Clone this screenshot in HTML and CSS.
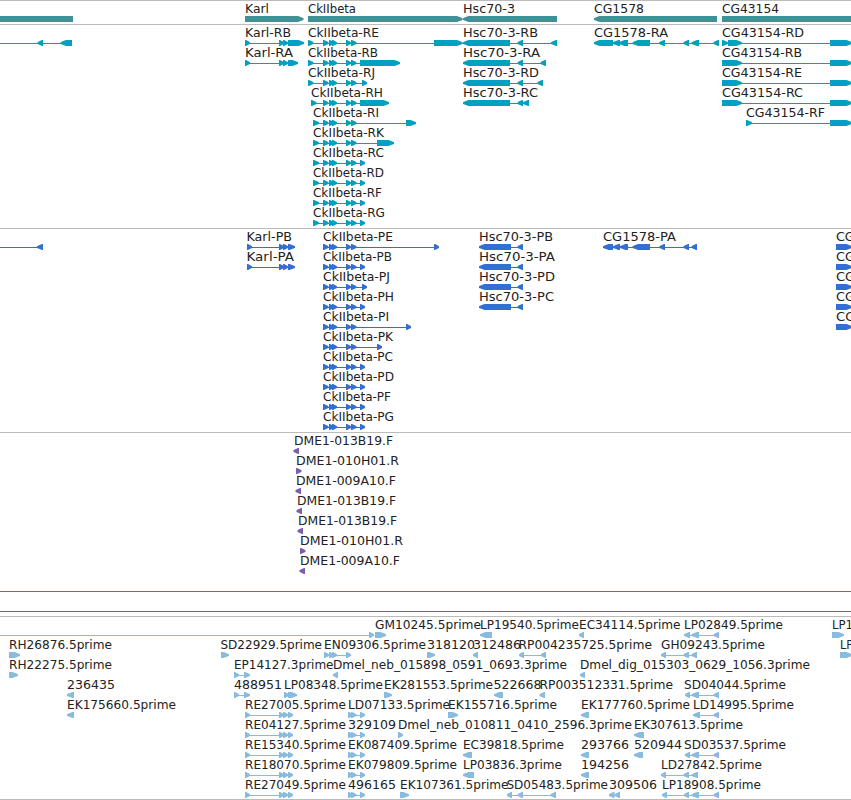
FILE: index.html
```
<!DOCTYPE html>
<html lang="en">
<head>
    <meta charset="UTF-8">
    <title>Genome Browser</title>
    <link rel="stylesheet" href="styles.css">
</head>
<body>
    <main class="browser">
        <svg class="track genes" id="genes"></svg>
        <svg class="track transcripts" id="transcripts"></svg>
        <svg class="track proteins" id="proteins"></svg>
        <svg class="track ends" id="ends"></svg>
        <svg class="track ests" id="ests"></svg>
    </main>
    <script src="tracks.js"></script>
</body>
</html>
```
FILE: styles.css
```
body {
    margin: 0;
    background: #fff;
    overflow: hidden;
}
.browser {
    display: flex;
    flex-direction: column;
    width: 851px;
    height: 800px;
    overflow: hidden;
}
.track {
    display: block;
    box-sizing: border-box;
    flex: none;
    width: 100%;
    border-top: 1px solid #bbb;
    overflow: hidden;
}
.track text {
    font-family: "DejaVu Sans", sans-serif;
    font-size: 12px;
    fill: #222;
}
.genes {
    height: 24px;
    color: #409096;
}
.transcripts {
    height: 204px;
    color: #00a0c0;
}
.proteins {
    height: 204px;
    color: #326fd0;
}
.ends {
    height: 184px;
    color: #7a5faf;
}
.ests {
    height: 184px;
    color: #88bbdd;
    border-bottom: 1px solid #bbb;
}
.backbone, .block {
    fill: currentColor;
}
.backbone {
    shape-rendering: crispEdges;
}
```
FILE: tracks.js
```
const NS = 'http://www.w3.org/2000/svg';
const ROW = 20;
const TIP = 5.5;

// exons shared by the CkIIbeta models
const CK = [[323, 328.5], [329, 334], [332, 337], [346, 351], [351, 356.5]];
const KARL = [[279, 284], [283, 288]];
const RE = [[245, 250], [279, 284], [283, 288], [288, 293]];
const LD = [[348, 353], [351, 356.5], [360, 365]];
const EP = [[234, 239], [244, 250]];
const HSC_P = [[479, 511], [517.5, 523]];
const CG_R = [[722, 742], [830, 852]];
const SD = [[685, 690], [691.5, 699], [713.5, 719]];

// row, label, label start, label end, strand, blocks
const tracks = {
    genes: [
        [0, '', 0, 0, -1, [[-20, 73]]],
        [0, 'Karl', 245, 269, 1, [[245, 303.5]]],
        [0, 'CkIIbeta', 308, 356, 1, [[308, 462.5]]],
        [0, 'Hsc70-3', 463, 515, -1, [[463, 557]]],
        [0, 'CG1578', 594, 644, -1, [[594, 717]]],
        [0, 'CG43154', 722, 779, 1, [[722, 880]]]
    ],
    transcripts: [
        [0, '', 0, 0, -1, [[-20, -10], [37.5, 43], [60.5, 72]]],
        [0, 'Karl-RB', 245, 291, 1, [[245, 250], ...KARL, [288, 304]]],
        [1, 'Karl-RA', 245, 293, 1, [[245, 250], ...KARL, [288, 298]]],
        [0, 'CkIIbeta-RE', 308, 379, 1, [[308, 313.5], ...CK, [434, 462.5]]],
        [1, 'CkIIbeta-RB', 308, 378, 1, [[308, 313.5], ...CK, [360, 400]]],
        [2, 'CkIIbeta-RJ', 308, 375, 1, [[308, 313.5], ...CK, [362, 367]]],
        [3, 'CkIIbeta-RH', 311, 383, 1, [[311, 316.5], ...CK, [360, 389]]],
        [4, 'CkIIbeta-RI', 313, 379, 1, [[313, 319], ...CK, [406, 416]]],
        [5, 'CkIIbeta-RK', 313, 384, 1, [[313, 319], ...CK, [377, 394]]],
        [6, 'CkIIbeta-RC', 313, 384, 1, [[313, 319], ...CK, [360, 365]]],
        [7, 'CkIIbeta-RD', 313, 384, 1, [[313, 319], ...CK, [360, 365]]],
        [8, 'CkIIbeta-RF', 313, 382, 1, [[313, 319], ...CK, [360, 365]]],
        [9, 'CkIIbeta-RG', 313, 385, 1, [[313, 319], ...CK, [360, 365]]],
        [0, 'Hsc70-3-RB', 463, 538, -1, [[463, 510], [517.5, 523], [551, 557]]],
        [1, 'Hsc70-3-RA', 463, 540, -1, [[463, 510], [517.5, 523], [540.5, 546]]],
        [2, 'Hsc70-3-RD', 463, 539, -1, [[463, 510], [517.5, 523], [537.5, 543]]],
        [3, 'Hsc70-3-RC', 463, 538, -1, [[463, 510], [517.5, 523], [523, 529]]],
        [0, 'CG1578-RA', 594, 668, -1, [[594, 613], [613, 620], [619, 628], [632.5, 650], [659, 665], [683.5, 689], [691.5, 699], [713.5, 719]]],
        [0, 'CG43154-RD', 722, 804, 1, [[722, 728], [728, 742], [830, 852]]],
        [1, 'CG43154-RB', 722, 802, 1, CG_R],
        [2, 'CG43154-RE', 722, 802, 1, CG_R],
        [3, 'CG43154-RC', 722, 803, 1, CG_R],
        [4, 'CG43154-RF', 746, 825, 1, [[746, 752], [830, 852]]]
    ],
    proteins: [
        [0, '', 0, 0, -1, [[-20, -10], [37, 43]]],
        [0, 'Karl-PB', 246.5, 292, 1, [[247, 252], ...KARL, [288, 295]]],
        [1, 'Karl-PA', 246.5, 294, 1, [[247, 252], ...KARL, [288, 295]]],
        [0, 'CkIIbeta-PE', 323, 393, 1, [...CK, [434, 439]]],
        [1, 'CkIIbeta-PB', 323, 392, 1, [...CK, [360, 365]]],
        [2, 'CkIIbeta-PJ', 323, 390, 1, [...CK, [362, 367]]],
        [3, 'CkIIbeta-PH', 323, 394, 1, [...CK, [360, 365]]],
        [4, 'CkIIbeta-PI', 323, 389, 1, [...CK, [406, 411]]],
        [5, 'CkIIbeta-PK', 323, 393, 1, [...CK, [377, 382]]],
        [6, 'CkIIbeta-PC', 323, 393, 1, [...CK, [360, 365]]],
        [7, 'CkIIbeta-PD', 323, 394, 1, [...CK, [360, 365]]],
        [8, 'CkIIbeta-PF', 323, 391, 1, [...CK, [360, 365]]],
        [9, 'CkIIbeta-PG', 323, 394, 1, [...CK, [360, 365]]],
        [0, 'Hsc70-3-PB', 479, 553, -1, HSC_P],
        [1, 'Hsc70-3-PA', 479, 555, -1, HSC_P],
        [2, 'Hsc70-3-PD', 479, 555, -1, HSC_P],
        [3, 'Hsc70-3-PC', 479, 554, -1, HSC_P],
        [0, 'CG1578-PA', 603, 676, -1, [[603, 613], [613, 620], [620, 628], [632.5, 650], [659.5, 665], [683.5, 689], [691.5, 697]]],
        [0, 'CG43154-PD', 836, 917, 1, [[836, 852]]],
        [1, 'CG43154-PB', 836, 917, 1, [[836, 852]]],
        [2, 'CG43154-PE', 836, 917, 1, [[836, 852]]],
        [3, 'CG43154-PC', 836, 917, 1, [[836, 852]]],
        [4, 'CG43154-PF', 836, 917, 1, [[836, 852]]]
    ],
    ends: [
        [0, 'DME1-013B19.F', 294, 393, -1, [[293.5, 299]]],
        [1, 'DME1-010H01.R', 296, 399, 1, [[296, 301.5]]],
        [2, 'DME1-009A10.F', 296, 396, -1, [[295.5, 301]]],
        [3, 'DME1-013B19.F', 297, 396, -1, [[296.5, 302]]],
        [4, 'DME1-013B19.F', 298, 397, -1, [[297.5, 303]]],
        [5, 'DME1-010H01.R', 300, 403, 1, [[300, 305.5]]],
        [6, 'DME1-009A10.F', 300, 400, -1, [[299.5, 305]]],
        [7, '', 0, 0, 1, [[-20, -10], [870, 880]]],
        [8, '', 0, 0, 1, [[-20, -10], [870, 880]]]
    ],
    ests: [
        [0, '', 0, 0, 1, [[-20, -10], [369, 374]]],
        [0, 'GM10245.5prime', 375, 481, 1, [[375, 386]]],
        [0, 'LP19540.5prime', 480, 579, -1, [[480, 492]]],
        [0, 'EC34114.5prime', 579, 680.5, -1, [[579, 584]]],
        [0, 'LP02849.5prime', 684, 783, -1, [[684, 690], [691.5, 699], [713.5, 719]]],
        [0, 'LP1', 832, 853, 1, [[832, 844]]],
        [1, 'RH26876.5prime', 9, 112, 1, [[9, 20]]],
        [1, 'SD22929.5prime', 220.5, 322, 1, [[221, 229]]],
        [1, 'EN09306.5prime', 324, 426, 1, [[324, 329], [329, 334], [332, 337], [346, 351]]],
        [1, '318120', 427, 475, 1, [[427, 435]]],
        [1, '312486', 473, 521, -1, [[473, 478]]],
        [1, 'RP004235725.5prime', 518.5, 652, -1, [[519, 524], [541, 546]]],
        [1, 'GH09243.5prime', 661, 765, -1, [[661, 666], [683.5, 689], [691.5, 697]]],
        [1, 'LP', 840, 853, 1, [[840, 852]]],
        [2, 'RH22275.5prime', 9, 112, 1, [[9, 18]]],
        [2, 'EP14127.3prime', 234, 333.5, 1, EP],
        [2, 'Dmel_neb_015898_0591_0693.3prime', 333, 567, -1, [[333, 338]]],
        [2, 'Dmel_dig_015303_0629_1056.3prime', 580, 810, -1, [[580, 585]]],
        [3, '236435', 67, 115, -1, [[67, 74]]],
        [3, '488951', 234, 282, 1, EP],
        [3, 'LP08348.5prime', 284, 383, 1, [[284, 289], [288, 297]]],
        [3, 'EK281553.5prime', 384, 493, 1, [[384, 392]]],
        [3, '522668', 493.5, 541.5, -1, [[494, 503]]],
        [3, 'RP003512331.5prime', 539.5, 673, -1, [[539.5, 545]]],
        [3, 'SD04044.5prime', 684, 786, -1, SD],
        [4, 'EK175660.5prime', 67, 176, -1, [[67, 74]]],
        [4, 'RE27005.5prime', 245, 346, 1, RE],
        [4, 'LD07133.5prime', 348, 450, 1, LD],
        [4, 'EK155716.5prime', 448, 557, 1, [[448, 458]]],
        [4, 'EK177760.5prime', 581, 690, -1, [[581, 589]]],
        [4, 'LD14995.5prime', 693, 794, -1, [[693, 700], [713.5, 719]]],
        [5, 'RE04127.5prime', 245, 346, 1, RE],
        [5, '329109', 348, 396, 1, LD],
        [5, 'Dmel_neb_010811_0410_2596.3prime', 398, 632, 1, [[398, 403]]],
        [5, 'EK307613.5prime', 634, 743, -1, [[634, 644]]],
        [6, 'RE15340.5prime', 245, 346, 1, RE],
        [6, 'EK087409.5prime', 348, 457, 1, LD],
        [6, 'EC39818.5prime', 463, 564, -1, [[463, 472]]],
        [6, '293766', 581, 629, -1, [[581, 589]]],
        [6, '520944', 634, 682, -1, [[634, 643]]],
        [6, 'SD03537.5prime', 684, 786, -1, SD],
        [7, 'RE18070.5prime', 245, 346, 1, RE],
        [7, 'EK079809.5prime', 348, 457, 1, LD],
        [7, 'LP03836.3prime', 463, 562, -1, [[463, 474]]],
        [7, '194256', 581, 629, -1, [[581, 589]]],
        [7, 'LD27842.5prime', 661, 762, -1, [[661, 666], [683.5, 689], [691.5, 698]]],
        [8, 'RE27049.5prime', 245, 346, 1, RE],
        [8, '496165', 348, 396, 1, LD],
        [8, 'EK107361.5prime', 400, 508.5, 1, [[400, 409]]],
        [8, 'SD05483.5prime', 506.5, 608, -1, [[507, 512], [517.5, 523], [550.5, 556]]],
        [8, '309506', 609, 657, -1, [[609, 614.5], [614.5, 620]]],
        [8, 'LP18908.5prime', 662, 761, -1, [[662, 667], [684, 689], [691.5, 699], [713.5, 719]]]
    ]
};

function add(svg, name, attrs) {
    const el = document.createElementNS(NS, name);
    for (const key in attrs) {
        el.setAttribute(key, attrs[key]);
    }
    svg.appendChild(el);
    return el;
}

// rounded arrow head, blunt at the very end
function arrow(x1, x2, y, strand) {
    const tip = Math.min(TIP, x2 - x1 - 1);
    const back = strand > 0 ? x1 : x2;
    const end = strand > 0 ? x2 : x1;
    const neck = end - strand * tip;
    const mid = end - strand * tip * 0.4;
    return `${back},${y} ${neck},${y} ${mid},${y + 1.3} ${end},${y + 2.3} ${end},${y + 4} ${mid},${y + 4.8} ${neck},${y + 6} ${back},${y + 6}`;
}

for (const id in tracks) {
    const svg = document.getElementById(id);
    tracks[id].forEach(([row, label, start, end, strand, blocks]) => {
        const top = row * ROW + 15;
        const first = blocks[0][0];
        const last = blocks[blocks.length - 1][1];
        if (blocks.length > 1) {
            add(svg, 'rect', { class: 'backbone', x: first, y: top + 3, width: last - first, height: 1 });
        }
        blocks.forEach(([x1, x2]) => {
            add(svg, 'polygon', { class: 'block', points: arrow(x1, x2, top, strand) });
        });
        if (label) {
            const text = add(svg, 'text', { x: start, y: top - 3, textLength: end - start, lengthAdjust: 'spacingAndGlyphs' });
            text.textContent = label;
        }
    });
}
```
